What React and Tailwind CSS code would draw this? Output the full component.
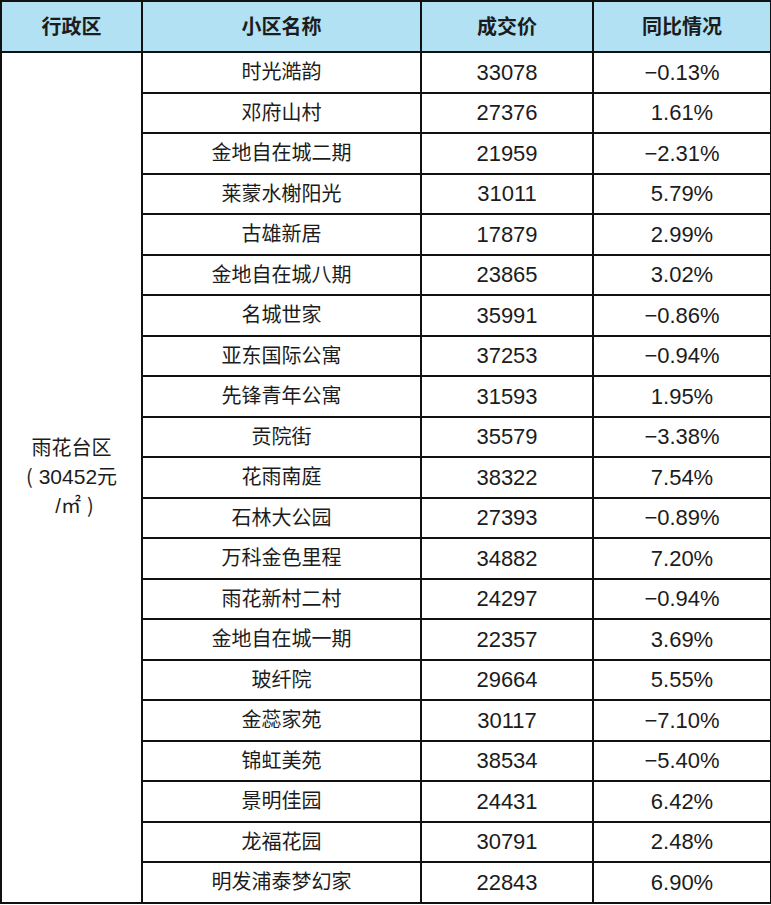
const rows = [
  ['时光澔韵', '33078', '−0.13%'],
  ['邓府山村', '27376', '1.61%'],
  ['金地自在城二期', '21959', '−2.31%'],
  ['莱蒙水榭阳光', '31011', '5.79%'],
  ['古雄新居', '17879', '2.99%'],
  ['金地自在城八期', '23865', '3.02%'],
  ['名城世家', '35991', '−0.86%'],
  ['亚东国际公寓', '37253', '−0.94%'],
  ['先锋青年公寓', '31593', '1.95%'],
  ['贡院街', '35579', '−3.38%'],
  ['花雨南庭', '38322', '7.54%'],
  ['石林大公园', '27393', '−0.89%'],
  ['万科金色里程', '34882', '7.20%'],
  ['雨花新村二村', '24297', '−0.94%'],
  ['金地自在城一期', '22357', '3.69%'],
  ['玻纤院', '29664', '5.55%'],
  ['金蕊家苑', '30117', '−7.10%'],
  ['锦虹美苑', '38534', '−5.40%'],
  ['景明佳园', '24431', '6.42%'],
  ['龙福花园', '30791', '2.48%'],
  ['明发浦泰梦幻家', '22843', '6.90%'],
];

const cjk = { fontFamily: '"Noto Sans CJK SC", sans-serif' };

export default function App() {
  return (
    <div className="w-[771px] h-[905px] bg-white">
      <table
        className="w-[770px] table-fixed border-collapse border-2 border-[#111] text-[#1c1c1c]"
        style={{ fontFamily: '"Liberation Sans", "Noto Sans CJK SC", sans-serif' }}
      >
        <colgroup>
          <col className="w-[141px]" />
          <col className="w-[279px]" />
          <col className="w-[172px]" />
          <col className="w-[178px]" />
        </colgroup>
        <thead>
          <tr className="bg-[#b1e1f3]">
            {['行政区', '小区名称', '成交价', '同比情况'].map((h) => (
              <th key={h} className="h-[51px] border-2 border-[#111] text-[20px] font-bold text-center p-0">
                {h}
              </th>
            ))}
          </tr>
        </thead>
        <tbody>
          {rows.map((r, i) => (
            <tr key={r[0]}>
              {i === 0 && (
                <td rowSpan={rows.length} className="border-2 border-[#111] text-center text-[20px] leading-[27px] p-0">
                  雨花台区
                  <br />
                  <span style={cjk} className="mr-[6px]">(</span>
                  <span className="text-[21px]">30452</span>元
                  <br />
                  <span className="pl-[6px]">/</span>
                  <span style={cjk}>㎡</span>
                  <span style={cjk} className="ml-[6px]">)</span>
                </td>
              )}
              <td className="h-[40.5px] border-2 border-[#111] text-center text-[20px] p-0">{r[0]}</td>
              <td className="h-[40.5px] border-2 border-[#111] text-center text-[22px] p-0">{r[1]}</td>
              <td className="h-[40.5px] border-2 border-[#111] text-center text-[22px] p-0">{r[2]}</td>
            </tr>
          ))}
        </tbody>
      </table>
    </div>
  );
}
